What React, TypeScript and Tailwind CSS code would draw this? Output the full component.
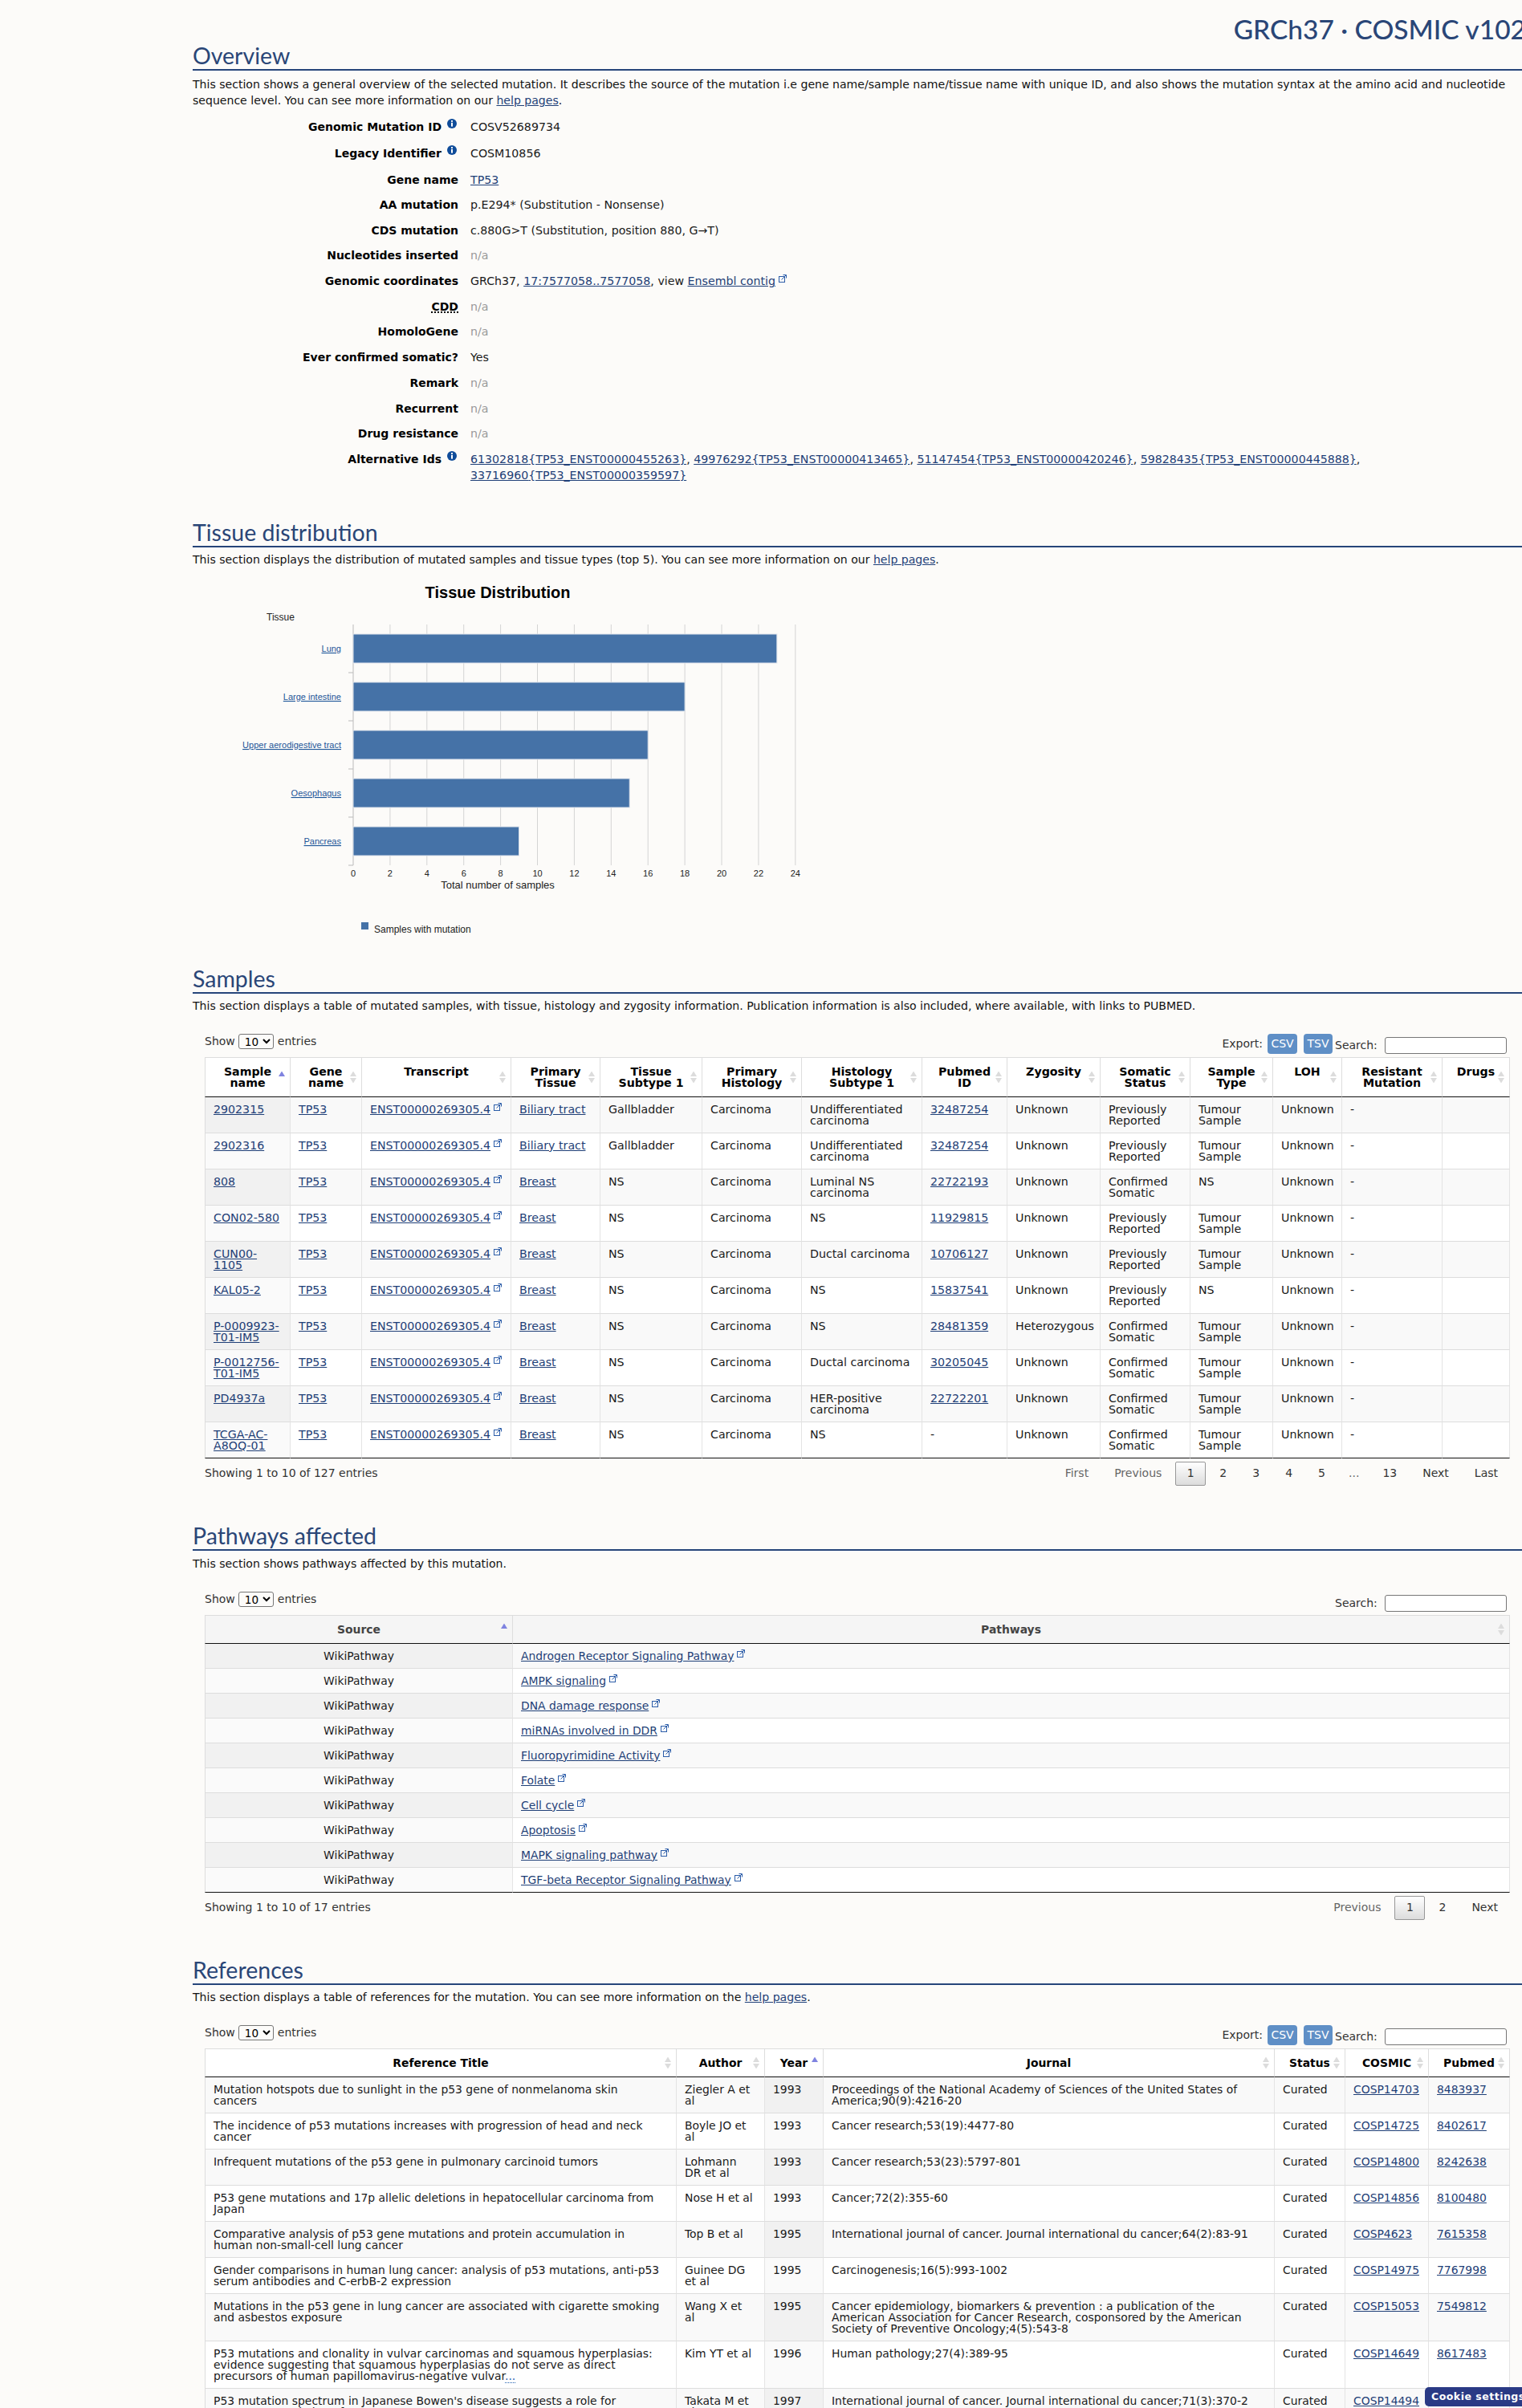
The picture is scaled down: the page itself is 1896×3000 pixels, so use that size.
import type { ReactNode } from "react";

const helpLink = (
  <a href="#" className="text-[#1f3f77] underline">
    help pages
  </a>
);

function InfoIcon() {
  return (
    <svg viewBox="0 0 12 12" className="w-3 h-3 shrink-0 ml-[7px]">
      <circle cx="6" cy="6" r="6" fill="#0f4c9a" />
      <rect x="5" y="2" width="2" height="1.8" fill="#fff" />
      <rect x="5" y="4.8" width="2" height="4.8" fill="#fff" />
    </svg>
  );
}

function ExtIcon() {
  return (
    <svg
      viewBox="0 0 10 10"
      className="inline-block w-[10px] h-[10px] ml-[4px] align-baseline relative -top-[3px]"
      fill="none"
      stroke="#2b5ca8"
      strokeWidth="1"
    >
      <rect x="0.5" y="2.5" width="7" height="7" />
      <path d="M3.5 6.5 L9 1 M5.5 0.5 H9.5 V4.5" />
    </svg>
  );
}

function Ext({ children }: { children: ReactNode }) {
  return (
    <span className="whitespace-nowrap">
      <L>{children}</L>
      <ExtIcon />
    </span>
  );
}

function L({ children }: { children: ReactNode }) {
  return (
    <a href="#" className="text-[#1f3f77] underline">
      {children}
    </a>
  );
}

function Heading({ children }: { children: ReactNode }) {
  return (
    <h2 className="h-[34px] border-b-2 border-[#26457a] font-['Lato',sans-serif] text-[28.5px] leading-[30px] text-[#2a4677]">
      {children}
    </h2>
  );
}

function Intro({ children, gap = "mt-[5px]" }: { children: ReactNode; gap?: string }) {
  return <p className={gap + " text-[14.07px] leading-[20px] text-[#111]"}>{children}</p>;
}

function NA() {
  return <span className="text-[#999]">n/a</span>;
}

const overviewRows: { label: ReactNode; info?: boolean; value: ReactNode; h: string }[] = [
  { label: "Genomic Mutation ID", info: true, value: "COSV52689734", h: "h-[33px]" },
  { label: "Legacy Identifier", info: true, value: "COSM10856", h: "h-[33px]" },
  { label: "Gene name", value: <L>TP53</L>, h: "h-[31px]" },
  { label: "AA mutation", value: "p.E294* (Substitution - Nonsense)", h: "h-[31.7px]" },
  { label: "CDS mutation", value: "c.880G>T (Substitution, position 880, G→T)", h: "h-[31.7px]" },
  { label: "Nucleotides inserted", value: <NA />, h: "h-[31.7px]" },
  {
    label: "Genomic coordinates",
    value: (
      <>
        GRCh37, <L>17:7577058..7577058</L>, view <Ext>Ensembl contig</Ext>
      </>
    ),
    h: "h-[31.7px]",
  },
  {
    label: <span className="underline decoration-dotted decoration-2 underline-offset-2">CDD</span>,
    value: <NA />,
    h: "h-[31.7px]",
  },
  { label: "HomoloGene", value: <NA />, h: "h-[31.7px]" },
  { label: "Ever confirmed somatic?", value: "Yes", h: "h-[31.7px]" },
  { label: "Remark", value: <NA />, h: "h-[31.7px]" },
  { label: "Recurrent", value: <NA />, h: "h-[31.7px]" },
  { label: "Drug resistance", value: <NA />, h: "h-[31.7px]" },
  {
    label: "Alternative Ids",
    info: true,
    value: (
      <>
        <L>61302818{"{TP53_ENST00000455263}"}</L>, <L>49976292{"{TP53_ENST00000413465}"}</L>,{" "}
        <L>51147454{"{TP53_ENST00000420246}"}</L>, <L>59828435{"{TP53_ENST00000445888}"}</L>,{" "}
        <L>33716960{"{TP53_ENST00000359597}"}</L>
      </>
    ),
    h: "h-[40px]",
  },
];

function Overview() {
  return (
    <section>
      <Heading>Overview</Heading>
      <Intro gap="mt-[7px]">
        This section shows a general overview of the selected mutation. It describes the source of the mutation i.e
        gene name/sample name/tissue name with unique ID, and also shows the mutation syntax at the amino acid and
        nucleotide sequence level. You can see more information on our {helpLink}.
      </Intro>
      <div className="mt-[13px] text-[14px] leading-[20px] text-[#1a1a1a]">
        {overviewRows.map((row, i) => (
          <div key={i} className={"flex " + row.h}>
            <div className="w-[331px] shrink-0 flex justify-end font-bold text-black">
              {row.label}
              {row.info && <InfoIcon />}
              {row.info && <span className="w-[2px]" />}
            </div>
            <div className="ml-[15px] w-[1130px] text-[14.2px]">{row.value}</div>
          </div>
        ))}
      </div>
    </section>
  );
}

const tissueBars = [
  { name: "Lung", n: 23 },
  { name: "Large intestine", n: 18 },
  { name: "Upper aerodigestive tract", n: 16 },
  { name: "Oesophagus", n: 15 },
  { name: "Pancreas", n: 9 },
];

function TissueChart() {
  const x0 = 440;
  const unit = 22.95;
  const ticks = Array.from({ length: 13 }, (_, i) => i * 2);
  return (
    <svg viewBox="240 712 800 480" className="mt-[5px] w-[800px] h-[480px] block font-['Liberation_Sans',sans-serif]">
      <text x="620" y="745" textAnchor="middle" fontSize="20" fontWeight="700" fill="#000">
        Tissue Distribution
      </text>
      <text x="332" y="773" fontSize="12" fill="#222">
        Tissue
      </text>
      {ticks.map((t) => (
        <g key={t}>
          <line x1={x0 + t * unit} x2={x0 + t * unit} y1="778" y2="1078" stroke={t === 0 ? "#bbb" : "#d4d4d4"} />
          <text x={x0 + t * unit} y="1092" textAnchor="middle" fontSize="11" fill="#222">
            {t}
          </text>
        </g>
      ))}
      {tissueBars.map((b, i) => (
        <g key={b.name}>
          <rect
            x={x0}
            y={790 + i * 60}
            width={b.n * unit}
            height="36"
            fill="#4572a7"
            stroke="#dde3ec"
            strokeWidth="1"
          />
          <text
            x="425"
            y={812 + i * 60}
            textAnchor="end"
            fontSize="11"
            fill="#1c5598"
            textDecoration="underline"
          >
            {b.name}
          </text>
          <line x1="434" x2="440" y1={838 + i * 60} y2={838 + i * 60} stroke="#bbb" />
        </g>
      ))}
      <text x="620" y="1107" textAnchor="middle" fontSize="13" fill="#222">
        Total number of samples
      </text>
      <rect x="450" y="1149" width="9" height="9" fill="#4572a7" />
      <text x="466" y="1162" fontSize="12" fill="#222">
        Samples with mutation
      </text>
    </svg>
  );
}

function SortArrows({ active }: { active?: boolean }) {
  return (
    <svg viewBox="0 0 8 15" className="absolute right-[6px] top-1/2 -translate-y-1/2 w-[8px] h-[15px]">
      <path d="M4 0 L8 6.5 H0 Z" fill={active ? "#7f83e0" : "#dcdcdc"} />
      {!active && <path d="M4 15 L8 8.5 H0 Z" fill="#dcdcdc" />}
    </svg>
  );
}

type Col = { title: ReactNode; width: string; sorted?: boolean };

function Th({ col, first, muted }: { col: Col; first: boolean; muted?: boolean }) {
  return (
    <th
      className={
        "relative align-top border-t border-r border-b border-t-[#ddd] border-r-[#ddd] border-b-[#111] px-[10px] py-[10px] text-center font-bold leading-[14px] " +
        (first ? "border-l border-l-[#ddd] " : "") +
        (muted ? "bg-[#f5f5f5] text-[#444]" : "text-black")
      }
    >
      {col.title}
      <SortArrows active={col.sorted} />
    </th>
  );
}

function DataTable({
  cols,
  rows,
  muted,
  centerFirst,
  size = "text-[14.2px]",
}: {
  cols: Col[];
  rows: ReactNode[][];
  muted?: boolean;
  centerFirst?: boolean;
  size?: string;
}) {
  return (
    <table className={"table-fixed w-[1626px] border-separate border-spacing-0 leading-[14px] bg-white " + size}>
      <colgroup>
        {cols.map((c, i) => (
          <col key={i} className={c.width} />
        ))}
      </colgroup>
      <thead>
        <tr>
          {cols.map((c, i) => (
            <Th key={i} col={c} first={i === 0} muted={muted} />
          ))}
        </tr>
      </thead>
      <tbody>
        {rows.map((row, r) => (
          <tr key={r}>
            {row.map((cell, c) => {
              const odd = r % 2 === 0;
              const bg = cols[c].sorted
                ? odd
                  ? "bg-[#f1f1f1]"
                  : "bg-[#fafafa]"
                : odd
                  ? "bg-[#f9f9f9]"
                  : "bg-white";
              const borderTop = r === 0 ? "" : "border-t border-t-[#ddd] ";
              const borderBottom = r === rows.length - 1 ? "border-b border-b-[#111] " : "";
              return (
                <td
                  key={c}
                  className={
                    "align-top px-[10px] py-[8px] text-[#1a1a1a] border-r border-r-[#e4e4e4] " +
                    borderTop +
                    borderBottom +
                    (c === 0 ? "border-l border-l-[#ddd] " : "") +
                    (centerFirst && c === 0 ? "text-center " : "") +
                    bg
                  }
                >
                  {cell}
                </td>
              );
            })}
          </tr>
        ))}
      </tbody>
    </table>
  );
}

function ShowEntries() {
  return (
    <div className="flex items-center text-[14px] text-[#333] h-[19px]">
      Show
      <select
        defaultValue="10"
        className="ml-[4px] mr-[5px] w-[44px] h-[19px] border border-[#767676] rounded-[3px] text-[13.6px] text-black pl-[3px]"
      >
        <option value="10">10</option>
        <option value="25">25</option>
      </select>
      entries
    </div>
  );
}

function SearchBox() {
  return (
    <div className="flex items-center text-[14px] text-[#333]">
      <span className="w-[56px]">Search:</span>
      <input className="ml-[6px] w-[152px] h-[21px] border border-[#767676] rounded-[3px] bg-white" />
    </div>
  );
}

function Toolbar({ exportBtns }: { exportBtns?: boolean }) {
  return (
    <div className="mt-[25px] flex justify-between h-[29px] w-[1626px]">
      <ShowEntries />
      <div className="flex items-start pr-[4px]">
        {exportBtns && (
          <div className="flex items-center text-[14px] text-[#333] h-[25px] mr-[3px]">
            Export:
            <span className="ml-[6px] w-[37px] h-[25px] rounded-[4px] bg-[#5f8fc6] text-white flex items-center justify-center">
              CSV
            </span>
            <span className="ml-[8px] w-[36px] h-[25px] rounded-[4px] bg-[#5f8fc6] text-white flex items-center justify-center">
              TSV
            </span>
          </div>
        )}
        <div className="pt-[4px]">
          <SearchBox />
        </div>
      </div>
    </div>
  );
}

function Pager({ items }: { items: { t: string; off?: boolean; cur?: boolean }[] }) {
  return (
    <div className="flex items-center text-[14px]">
      {items.map((p) =>
        p.cur ? (
          <span
            key={p.t}
            className="ml-[2px] h-[30px] w-[38px] flex items-center justify-center rounded-[2px] border border-[#979797] bg-gradient-to-b from-white to-[#dcdcdc] text-[#333]"
          >
            {p.t}
          </span>
        ) : p.t === "..." ? (
          <span key={p.t} className="ml-[2px] h-[30px] px-[12px] flex items-center text-[#666]">
            {p.t}
          </span>
        ) : (
          <span
            key={p.t}
            className={"ml-[2px] h-[30px] px-[15px] flex items-center " + (p.off ? "text-[#666]" : "text-[#333]")}
          >
            {p.t}
          </span>
        ),
      )}
    </div>
  );
}

function TableFooter({ info, pager }: { info: string; pager: ReactNode }) {
  return (
    <div className="w-[1626px] pt-[4px] flex justify-between">
      <div className="pt-[4px] text-[14px] leading-[20px] text-[#333]">{info}</div>
      {pager}
    </div>
  );
}

const ENST = "ENST00000269305.4";
const PR = "Previously Reported";
const CS = "Confirmed Somatic";
const TS = "Tumour Sample";

const sampleData: [string, string, string, string, string, string, string, string][] = [
  ["2902315", "Biliary tract", "Gallbladder", "Undifferentiated carcinoma", "32487254", "Unknown", PR, TS],
  ["2902316", "Biliary tract", "Gallbladder", "Undifferentiated carcinoma", "32487254", "Unknown", PR, TS],
  ["808", "Breast", "NS", "Luminal NS carcinoma", "22722193", "Unknown", CS, "NS"],
  ["CON02-580", "Breast", "NS", "NS", "11929815", "Unknown", PR, TS],
  ["CUN00-1105", "Breast", "NS", "Ductal carcinoma", "10706127", "Unknown", PR, TS],
  ["KAL05-2", "Breast", "NS", "NS", "15837541", "Unknown", PR, "NS"],
  ["P-0009923-T01-IM5", "Breast", "NS", "NS", "28481359", "Heterozygous", CS, TS],
  ["P-0012756-T01-IM5", "Breast", "NS", "Ductal carcinoma", "30205045", "Unknown", CS, TS],
  ["PD4937a", "Breast", "NS", "HER-positive carcinoma", "22722201", "Unknown", CS, TS],
  ["TCGA-AC-A8OQ-01", "Breast", "NS", "NS", "-", "Unknown", CS, TS],
];

const sampleCols: Col[] = [
  { title: "Sample name", width: "w-[107px]", sorted: true },
  { title: "Gene name", width: "w-[89px]" },
  { title: "Transcript", width: "w-[186px]" },
  { title: "Primary Tissue", width: "w-[111px]" },
  { title: "Tissue Subtype 1", width: "w-[127px]" },
  { title: "Primary Histology", width: "w-[124px]" },
  { title: "Histology Subtype 1", width: "w-[150px]" },
  { title: "Pubmed ID", width: "w-[106px]" },
  { title: "Zygosity", width: "w-[116px]" },
  { title: "Somatic Status", width: "w-[112px]" },
  { title: "Sample Type", width: "w-[103px]" },
  { title: "LOH", width: "w-[86px]" },
  { title: "Resistant Mutation", width: "w-[125px]" },
  { title: "Drugs", width: "w-[84px]" },
];

const sampleRows: ReactNode[][] = sampleData.map((d) => [
  <L>{d[0]}</L>,
  <L>TP53</L>,
  <Ext>{ENST}</Ext>,
  <L>{d[1]}</L>,
  d[2],
  "Carcinoma",
  d[3],
  d[4] === "-" ? "-" : <L>{d[4]}</L>,
  d[5],
  d[6],
  d[7],
  "Unknown",
  "-",
  "",
]);

const pathways = [
  "Androgen Receptor Signaling Pathway",
  "AMPK signaling",
  "DNA damage response",
  "miRNAs involved in DDR",
  "Fluoropyrimidine Activity",
  "Folate",
  "Cell cycle",
  "Apoptosis",
  "MAPK signaling pathway",
  "TGF-beta Receptor Signaling Pathway",
];

const refCols: Col[] = [
  { title: "Reference Title", width: "w-[588px]" },
  { title: "Author", width: "w-[110px]" },
  { title: "Year", width: "w-[73px]", sorted: true },
  { title: "Journal", width: "w-[562px]" },
  { title: "Status", width: "w-[88px]" },
  { title: "COSMIC", width: "w-[104px]" },
  { title: "Pubmed", width: "w-[101px]" },
];

const refData: [ReactNode, string, string, string, string, string][] = [
  ["Mutation hotspots due to sunlight in the p53 gene of nonmelanoma skin cancers", "Ziegler A et al", "1993", "Proceedings of the National Academy of Sciences of the United States of America;90(9):4216-20", "COSP14703", "8483937"],
  ["The incidence of p53 mutations increases with progression of head and neck cancer", "Boyle JO et al", "1993", "Cancer research;53(19):4477-80", "COSP14725", "8402617"],
  ["Infrequent mutations of the p53 gene in pulmonary carcinoid tumors", "Lohmann DR et al", "1993", "Cancer research;53(23):5797-801", "COSP14800", "8242638"],
  ["P53 gene mutations and 17p allelic deletions in hepatocellular carcinoma from Japan", "Nose H et al", "1993", "Cancer;72(2):355-60", "COSP14856", "8100480"],
  ["Comparative analysis of p53 gene mutations and protein accumulation in human non-small-cell lung cancer", "Top B et al", "1995", "International journal of cancer. Journal international du cancer;64(2):83-91", "COSP4623", "7615358"],
  ["Gender comparisons in human lung cancer: analysis of p53 mutations, anti-p53 serum antibodies and C-erbB-2 expression", "Guinee DG et al", "1995", "Carcinogenesis;16(5):993-1002", "COSP14975", "7767998"],
  ["Mutations in the p53 gene in lung cancer are associated with cigarette smoking and asbestos exposure", "Wang X et al", "1995", "Cancer epidemiology, biomarkers & prevention : a publication of the American Association for Cancer Research, cosponsored by the American Society of Preventive Oncology;4(5):543-8", "COSP15053", "7549812"],
  [
    <>
      P53 mutations and clonality in vulvar carcinomas and squamous hyperplasias: evidence suggesting that squamous
      hyperplasias do not serve as direct precursors of human papillomavirus-negative vulvar
      <span className="text-[#1f5fb0] border-b border-dotted border-[#1f5fb0]">...</span>
    </>,
    "Kim YT et al",
    "1996",
    "Human pathology;27(4):389-95",
    "COSP14649",
    "8617483",
  ],
  ["P53 mutation spectrum in Japanese Bowen's disease suggests a role for mutagens consisting of", "Takata M et al", "1997", "International journal of cancer. Journal international du cancer;71(3):370-2", "COSP14494", "9139870"],
];

const refRows: ReactNode[][] = refData.map((d) => [
  <div className="max-w-[560px]">{d[0]}</div>,
  <div className="max-w-[87px]">{d[1]}</div>,
  d[2],
  d[3],
  "Curated",
  <L>{d[4]}</L>,
  <L>{d[5]}</L>,
]);

export default function App() {
  return (
    <div className="relative w-[1896px] h-[3000px] overflow-hidden bg-[#fcfbf9] font-['DejaVu_Sans',sans-serif] text-[#222]">
      <main className="pl-[240px]">
        <header className="h-[54px] pt-[18px] flex justify-end -mr-[5px]">
          <h1 className="font-['Lato',sans-serif] text-[33.5px] leading-[36px] font-medium text-[#2a4677] whitespace-nowrap">
            GRCh37 · COSMIC v102
          </h1>
        </header>

        <Overview />

        <section className="mt-[46px]">
          <Heading>Tissue distribution</Heading>
          <Intro>
            This section displays the distribution of mutated samples and tissue types (top 5). You can see more
            information on our {helpLink}.
          </Intro>
          <TissueChart />
        </section>

        <section className="mt-[12px]">
          <Heading>Samples</Heading>
          <Intro>
            This section displays a table of mutated samples, with tissue, histology and zygosity information.
            Publication information is also included, where available, with links to PUBMED.
          </Intro>
          <div className="ml-[15px]">
            <Toolbar exportBtns />
            <DataTable cols={sampleCols} rows={sampleRows} />
            <TableFooter
              info="Showing 1 to 10 of 127 entries"
              pager={
                <Pager
                  items={[
                    { t: "First", off: true },
                    { t: "Previous", off: true },
                    { t: "1", cur: true },
                    { t: "2" },
                    { t: "3" },
                    { t: "4" },
                    { t: "5" },
                    { t: "...", off: true },
                    { t: "13" },
                    { t: "Next" },
                    { t: "Last" },
                  ]}
                />
              }
            />
          </div>
        </section>

        <section className="mt-[47px]">
          <Heading>Pathways affected</Heading>
          <Intro gap="mt-[6px]">This section shows pathways affected by this mutation.</Intro>
          <div className="ml-[15px]">
            <Toolbar />
            <DataTable
              muted
              centerFirst
              size="text-[13.9px]"
              cols={[
                { title: "Source", width: "w-[384px]", sorted: true },
                { title: "Pathways", width: "w-[1242px]" },
              ]}
              rows={pathways.map((p) => ["WikiPathway", <Ext>{p}</Ext>])}
            />
            <TableFooter
              info="Showing 1 to 10 of 17 entries"
              pager={
                <Pager items={[{ t: "Previous", off: true }, { t: "1", cur: true }, { t: "2" }, { t: "Next" }]} />
              }
            />
          </div>
        </section>

        <section className="mt-[47px]">
          <Heading>References</Heading>
          <Intro>
            This section displays a table of references for the mutation. You can see more information on the{" "}
            {helpLink}.
          </Intro>
          <div className="ml-[15px]">
            <Toolbar exportBtns />
            <DataTable size="text-[13.9px]" cols={refCols} rows={refRows} />
          </div>
        </section>
      </main>
      <div className="fixed right-0 top-[2974px] h-[24px] w-[121px] rounded-l-[5px] bg-[#2a3a85] pl-[8px] text-[12.5px] leading-[24px] font-bold tracking-[0.5px] text-white whitespace-nowrap overflow-hidden">
        Cookie settings
      </div>
    </div>
  );
}
